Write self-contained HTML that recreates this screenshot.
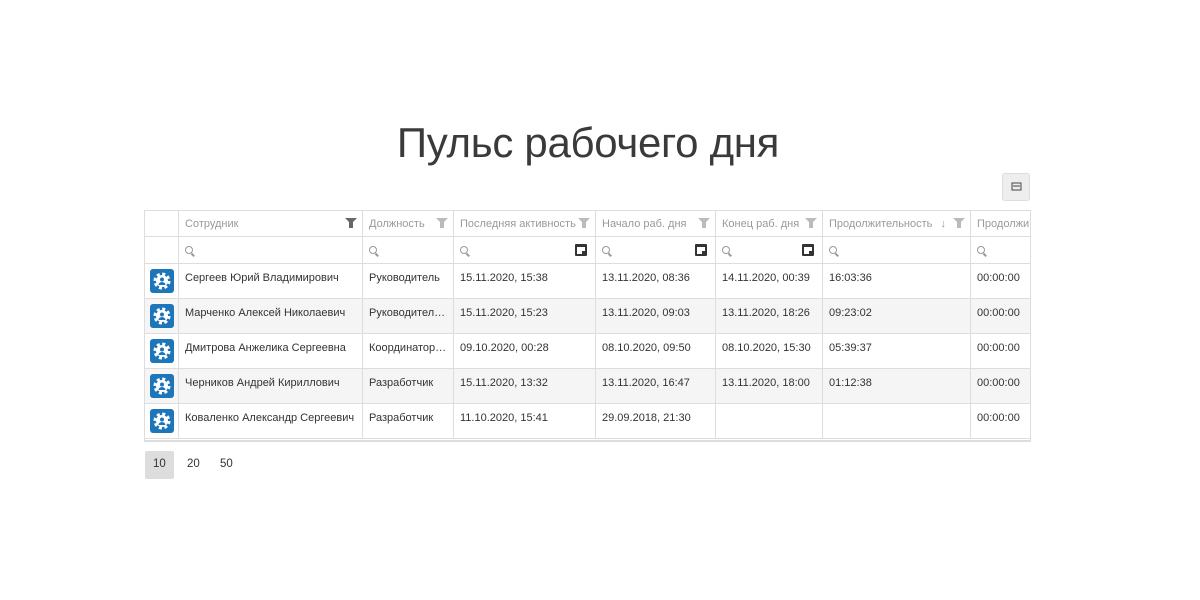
<!DOCTYPE html>
<html><head><meta charset="utf-8"><style>
body{margin:0;width:1200px;height:600px;background:#fff;font-family:"Liberation Sans",sans-serif;overflow:hidden;position:relative;color:#333}
h1{position:absolute;top:119px;left:0;width:1176px;text-align:center;margin:0;font-weight:300;font-size:42px;color:#3a3a3a;letter-spacing:-0.3px}
.btn{position:absolute;left:1002px;top:173px;width:28px;height:28px;background:#eee;border:1px solid #ddd;border-radius:3px;box-sizing:border-box}
.wrap{position:absolute;left:144px;top:210px;width:887px;height:232px;overflow:hidden;border:1px solid #ddd;border-bottom:2px solid #ddd;box-sizing:border-box}
table{border-collapse:collapse;table-layout:fixed;width:906px;font-size:11px;position:absolute;left:-1px;top:-1px}
td{border:1px solid #ddd;padding:0 6px;white-space:nowrap;overflow:hidden;text-overflow:ellipsis;height:34px;position:relative}
tr.d td{vertical-align:top;padding-top:8px;height:26px}
tr.h td{height:25px;color:#999}
tr.f td{height:26px}
tr.g td{background:#f5f5f5}
.fl{position:absolute;right:5px;top:7px;width:0;height:0;border-left:6px solid transparent;border-right:6px solid transparent;border-top:6px solid #bbb}
.fl:after{content:"";position:absolute;left:-2px;top:-2px;width:4px;height:6px;background:#bbb}
.fl.d{border-top-color:#666}.fl.d:after{background:#666}
.s{display:inline-block;width:6px;height:6px;border:1.5px solid #999;border-radius:50%;position:relative;top:1px}
.s:after{content:"";position:absolute;width:4px;height:1.5px;background:#999;transform:rotate(45deg);left:5px;top:7px}
.cal{position:absolute;right:8px;top:7px;width:8px;height:7px;border:2px solid #333;border-top-width:3px;border-radius:1px}
.cal:after{content:"";position:absolute;right:0;bottom:0;width:3px;height:3px;background:#333}
.av{width:24px;height:24px;background:#1d76b9;border-radius:3px;margin-left:-1px;margin-top:-3px}
</style></head><body>
<h1>Пульс рабочего дня</h1>
<div class="btn"><svg width="26" height="26" viewBox="0 0 26 26"><rect x="9" y="9" width="9" height="7" fill="none" stroke="#444" stroke-width="1"/><line x1="10" y1="12" x2="17" y2="12" stroke="#444"/></svg></div>
<div class="wrap"><table>
<colgroup><col style="width:34px"><col style="width:184px"><col style="width:91px"><col style="width:142px"><col style="width:120px"><col style="width:107px"><col style="width:148px"><col style="width:80px"></colgroup>
<tr class="h"><td></td><td>Сотрудник<i class="fl d"></i></td><td>Должность<i class="fl"></i></td><td>Последняя активность<i class="fl"></i></td><td>Начало раб. дня<i class="fl"></i></td><td>Конец раб. дня<i class="fl"></i></td><td>Продолжительность <span style="position:absolute;right:24px;color:#999">↓</span><i class="fl"></i></td><td>Продолжи</td></tr>
<tr class="f"><td></td><td><i class="s"></i></td><td><i class="s"></i></td><td><i class="s"></i><i class="cal"></i></td><td><i class="s"></i><i class="cal"></i></td><td><i class="s"></i><i class="cal"></i></td><td><i class="s"></i></td><td><i class="s"></i></td></tr>
<tr class="d"><td><div class="av"><svg width="24" height="24" viewBox="0 0 24 24"><circle cx="12" cy="12" r="7" fill="none" stroke="#fff" stroke-width="3" stroke-dasharray="3 2.5"/><circle cx="12" cy="12" r="6" fill="#fff"/><circle cx="12" cy="10.5" r="2" fill="#1d76b9"/><path d="M8.5 16a3.5 3 0 0 1 7 0z" fill="#1d76b9"/></svg></div></td><td>Сергеев Юрий Владимирович</td><td>Руководитель</td><td>15.11.2020, 15:38</td><td>13.11.2020, 08:36</td><td>14.11.2020, 00:39</td><td>16:03:36</td><td>00:00:00</td></tr>
<tr class="d g"><td><div class="av"><svg width="24" height="24" viewBox="0 0 24 24"><circle cx="12" cy="12" r="7" fill="none" stroke="#fff" stroke-width="3" stroke-dasharray="3 2.5"/><circle cx="12" cy="12" r="6" fill="#fff"/><circle cx="12" cy="10.5" r="2" fill="#1d76b9"/><path d="M8.5 16a3.5 3 0 0 1 7 0z" fill="#1d76b9"/></svg></div></td><td>Марченко Алексей Николаевич</td><td>Руководитель отдела</td><td>15.11.2020, 15:23</td><td>13.11.2020, 09:03</td><td>13.11.2020, 18:26</td><td>09:23:02</td><td>00:00:00</td></tr>
<tr class="d"><td><div class="av"><svg width="24" height="24" viewBox="0 0 24 24"><circle cx="12" cy="12" r="7" fill="none" stroke="#fff" stroke-width="3" stroke-dasharray="3 2.5"/><circle cx="12" cy="12" r="6" fill="#fff"/><circle cx="12" cy="10.5" r="2" fill="#1d76b9"/><path d="M8.5 16a3.5 3 0 0 1 7 0z" fill="#1d76b9"/></svg></div></td><td>Дмитрова Анжелика Сергеевна</td><td>Координатор проектов</td><td>09.10.2020, 00:28</td><td>08.10.2020, 09:50</td><td>08.10.2020, 15:30</td><td>05:39:37</td><td>00:00:00</td></tr>
<tr class="d g"><td><div class="av"><svg width="24" height="24" viewBox="0 0 24 24"><circle cx="12" cy="12" r="7" fill="none" stroke="#fff" stroke-width="3" stroke-dasharray="3 2.5"/><circle cx="12" cy="12" r="6" fill="#fff"/><circle cx="12" cy="10.5" r="2" fill="#1d76b9"/><path d="M8.5 16a3.5 3 0 0 1 7 0z" fill="#1d76b9"/></svg></div></td><td>Черников Андрей Кириллович</td><td>Разработчик</td><td>15.11.2020, 13:32</td><td>13.11.2020, 16:47</td><td>13.11.2020, 18:00</td><td>01:12:38</td><td>00:00:00</td></tr>
<tr class="d"><td><div class="av"><svg width="24" height="24" viewBox="0 0 24 24"><circle cx="12" cy="12" r="7" fill="none" stroke="#fff" stroke-width="3" stroke-dasharray="3 2.5"/><circle cx="12" cy="12" r="6" fill="#fff"/><circle cx="12" cy="10.5" r="2" fill="#1d76b9"/><path d="M8.5 16a3.5 3 0 0 1 7 0z" fill="#1d76b9"/></svg></div></td><td>Коваленко Александр Сергеевич</td><td>Разработчик</td><td>11.10.2020, 15:41</td><td>29.09.2018, 21:30</td><td></td><td></td><td>00:00:00</td></tr>
</table></div>
<div style="position:absolute;left:145px;top:451px;width:29px;height:28px;background:#ddd;border-radius:2px"></div>
<div style="position:absolute;top:458px;left:153px;font-size:11.5px">10</div>
<div style="position:absolute;top:458px;left:187px;font-size:11.5px">20</div>
<div style="position:absolute;top:458px;left:220px;font-size:11.5px">50</div>
</body></html>
